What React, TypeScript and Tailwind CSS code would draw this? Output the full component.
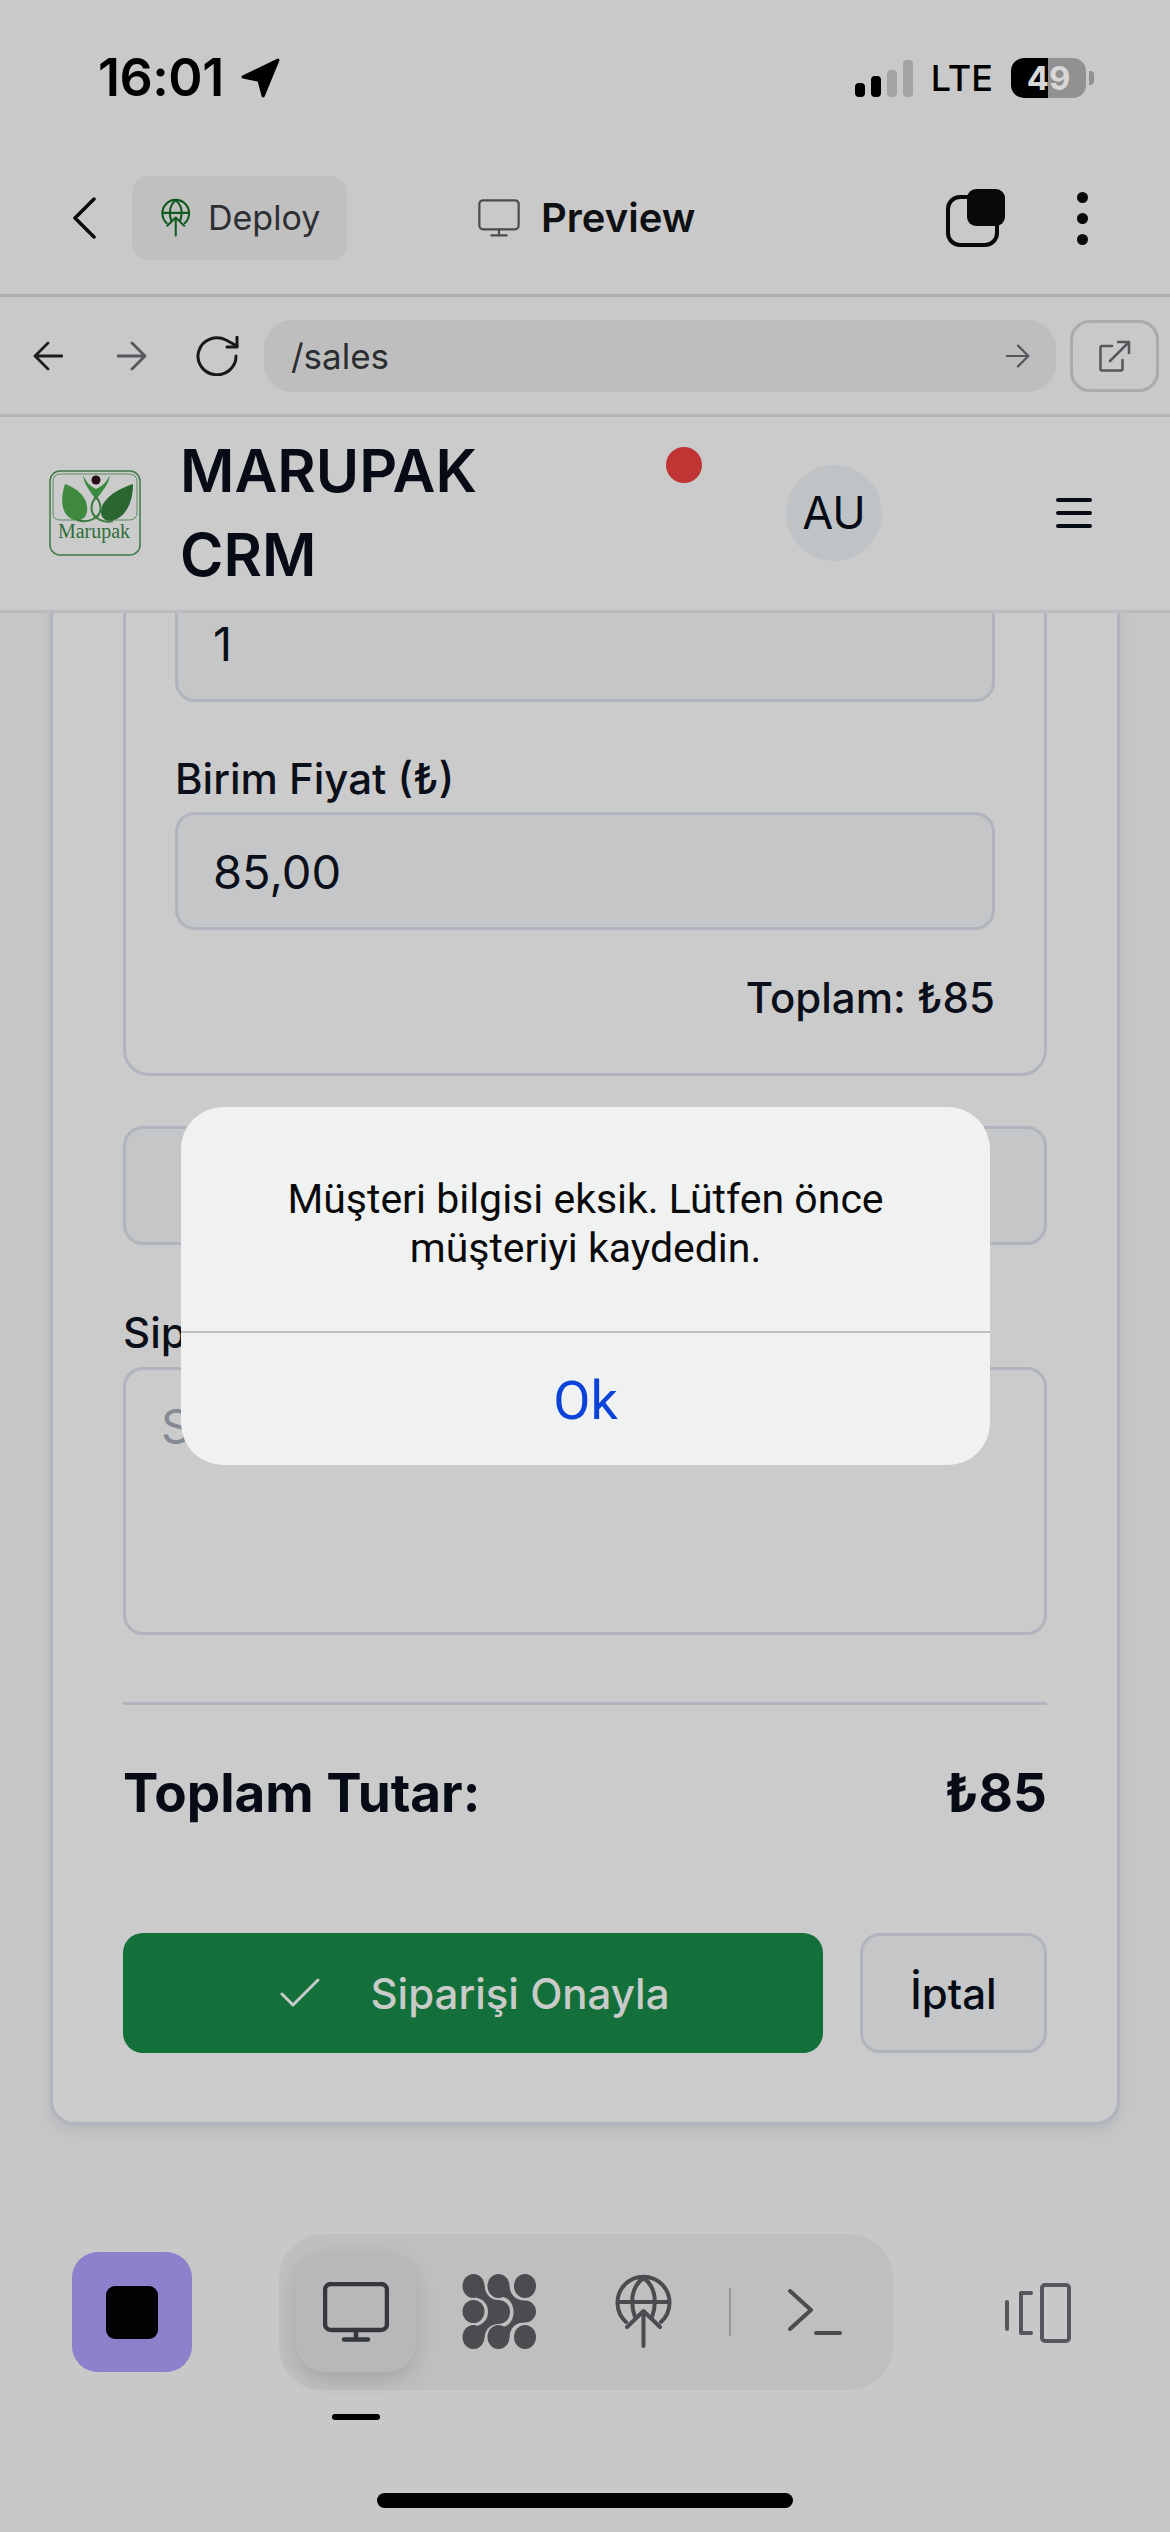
import { JSX } from 'react'

const GlobeUp = ({ className, color }: { className: string; color: string }): JSX.Element => (
  <svg viewBox="0 0 70 84" className={className} fill="none" stroke={color} strokeWidth="4" strokeLinecap="round" strokeLinejoin="round">
    <path d="M17 52A26 26 0 1 1 52 52" />
    <path d="M26 47C20 30 24 15 34.500 8C45 15 49 30 43 47" />
    <path d="M9 32H60" />
    <path d="M34.500 76V42M18 57L34.500 41L51 57" />
  </svg>
)

const Monitor = ({ className, color, width }: { className: string; color: string; width: number }): JSX.Element => (
  <svg viewBox="0 0 66 60" className={className} fill="none" stroke={color} strokeWidth={width} strokeLinecap="round" strokeLinejoin="round">
    <rect x="2" y="2" width="62" height="46" rx="6" />
    <path d="M33 48V57M21 57.500H45" />
  </svg>
)

const Blobs = (): JSX.Element => (
  <svg viewBox="0 0 90 84" className="h-[84px] w-[90px]" fill="#4a4c50">
    <ellipse cx="18.500" cy="16" rx="11" ry="12" />
    <ellipse cx="43.500" cy="16" rx="11" ry="12" />
    <ellipse cx="70" cy="16" rx="11" ry="12" />
    <ellipse cx="18.500" cy="41.500" rx="11" ry="11.500" />
    <ellipse cx="18.500" cy="67" rx="11" ry="12" />
    <ellipse cx="43.500" cy="67" rx="11" ry="12" />
    <ellipse cx="70" cy="67" rx="11" ry="12" />
    <path d="M18 16L29.500 16C30 24 36 30 43 30C51 30 55 36 55 42C55 48 51 54 43 54C36 54 30.500 59 29.500 67L18 67L22 56C28 54 33 50 33 42C33 34 28 29 22 28Z" />
    <path d="M34 22C36 25 40 26.500 44 26.500C54 26.500 58.500 34 58.500 42C58.500 50 54 57.500 44 57.500C40 57.500 36 59 34 62L44 67L54.500 67C55 58 60 52.500 70 52.500A11 11 0 0 0 70 30.500C60 30.500 55 24 54.500 16L44 16Z" />
  </svg>
)

const Logo = (): JSX.Element => (
  <svg viewBox="0 0 92 86" className="h-[86px] w-[92px] shrink-0" fill="none">
    <rect x="1" y="1" width="90" height="84" rx="10" stroke="#3d7a48" strokeWidth="1.500" />
    <path d="M4 44V12Q4 4 12 4H80Q88 4 88 12V42Q88 50 80 50H62M30 50H12Q4 50 4 44" stroke="#3d7a48" strokeWidth="0.800" />
    <path d="M16 14C28 18 40 28 38 42C37 48 32 51 26 50C16 48 9 36 16 14Z" fill="#3f8a3f" />
    <path d="M84 14C84 36 74 50 60 51C52 50 50 42 54 34C60 24 72 18 84 14Z" fill="#2a6630" />
    <path d="M34 5C35 15 42 22 47 30C52 22 60 15 61 5C58 12 52 17 47 19C42 17 37 12 34 5Z" fill="#3a8a40" />
    <path d="M47 27C41 34 41 42 47 48C53 42 53 34 47 27ZM28 50Q42 54 50 44M64 51Q52 54 44 44" stroke="#3a7a40" strokeWidth="2" />
    <circle cx="47" cy="10" r="4.500" fill="#2a0d18" />
    <text x="45" y="68" textAnchor="middle" fontFamily="'Liberation Serif', serif" fontSize="20" fill="#2f6e3c">Marupak</text>
  </svg>
)

const BrowserArrow = ({ back, className, color }: { back?: boolean; className: string; color: string }): JSX.Element => (
  <svg viewBox="0 0 30 30" className={className} fill="none" stroke={color} strokeWidth="2.800" strokeLinecap="round" strokeLinejoin="round">
    {back ? <path d="M29 15H2M15 2L2 15L15 28" /> : <path d="M1 15H28M15 2L28 15L15 28" />}
  </svg>
)

const StatusBar = (): JSX.Element => (
  <div className="flex h-[106px] pt-[50px]">
    <div className="ml-[98px] flex h-[56px] items-center">
      <span className="text-[52px] leading-[56px] font-semibold tracking-[-0.5px] text-black">16:01</span>
      <svg viewBox="0 0 38 38" className="ml-[16px] h-[40px] w-[40px]" fill="#000" stroke="#000" strokeWidth="3" strokeLinejoin="round">
        <path d="M36 2L3 18L18 21L22 36Z" />
      </svg>
    </div>
    <div className="ml-auto mr-[76px] flex h-[56px] items-center">
      <div className="flex h-[37px] items-end gap-[6px]">
        <span className="h-[14px] w-[10px] rounded-[4px] bg-black" />
        <span className="h-[21px] w-[10px] rounded-[4px] bg-black" />
        <span className="h-[27px] w-[10px] rounded-[4px] bg-[#a3a3a3]" />
        <span className="h-[37px] w-[10px] rounded-[4px] bg-[#a3a3a3]" />
      </div>
      <span className="ml-[18px] text-[36px] leading-[56px] font-medium text-black">LTE</span>
      <div className="relative ml-[18px] flex h-[40px] w-[75px] items-center justify-center overflow-hidden rounded-[13px] bg-[linear-gradient(to_right,#000_49%,#919191_49%)]">
        <span className="text-[33px] leading-[40px] font-bold text-[#d8d8d8]">49</span>
      </div>
      <span className="ml-[3px] h-[14px] w-[5px] rounded-r-[4px] bg-[#919191]" />
    </div>
  </div>
)

const TopBar = (): JSX.Element => (
  <div className="flex h-[191px] items-start border-b-[3px] border-[#aeafb0] pt-[70px]">
    <div className="flex h-[84px] items-center">
      <svg viewBox="0 0 24 42" className="ml-[72px] h-[42px] w-[24px]" fill="none" stroke="#0a0a0a" strokeWidth="3.500" strokeLinecap="round" strokeLinejoin="round">
        <path d="M22 2L3 21L22 40" />
      </svg>
      <button type="button" className="ml-[36px] flex h-[84px] w-[215px] items-center rounded-[16px] bg-[#c0c0c0] pl-[26px]">
        <GlobeUp className="h-[44px] w-[36px]" color="#0f5a1e" />
        <span className="ml-[14px] text-[34px] leading-[44px] text-[#2d2f33]">Deploy</span>
      </button>
      <Monitor className="ml-[131px] h-[38px] w-[42px]" color="#4a4c50" width={3.500} />
      <span className="ml-[21px] text-[40px] leading-[48px] font-semibold text-[#0f1013]">Preview</span>
    </div>
    <div className="ml-auto flex h-[84px] items-center">
      <div className="relative mr-[72px] h-[58px] w-[59px]">
        <span className="absolute bottom-0 left-0 h-[52px] w-[53px] rounded-[14px] border-[4px] border-[#08090b]" />
        <span className="absolute right-0 top-0 h-[37px] w-[38px] rounded-[9px] bg-[#08090b]" />
      </div>
      <div className="mr-[82px] flex flex-col gap-[10px]">
        <span className="h-[11px] w-[11px] rounded-full bg-[#08090b]" />
        <span className="h-[11px] w-[11px] rounded-full bg-[#08090b]" />
        <span className="h-[11px] w-[11px] rounded-full bg-[#08090b]" />
      </div>
    </div>
  </div>
)

const BrowserBar = (): JSX.Element => (
  <div className="flex h-[120px] items-center border-b-[3px] border-[#b4b5b7]">
    <BrowserArrow back className="ml-[33px] h-[30px] w-[30px]" color="#1c1d20" />
    <BrowserArrow className="ml-[54px] h-[30px] w-[30px]" color="#55575c" />
    <svg viewBox="0 0 46 40" className="ml-[49px] h-[40px] w-[46px]" fill="none" stroke="#17181a" strokeWidth="3" strokeLinecap="round" strokeLinejoin="round">
      <path d="M40 20A19 18.500 0 1 1 30 4L41 10" />
      <path d="M41 1V11H31" />
    </svg>
    <div className="ml-[22px] flex h-[72px] w-[792px] items-center rounded-[28px] bg-[#bebebe] pl-[27px] pr-[26px]">
      <span className="text-[35px] leading-[44px] text-[#2b2c30]">/sales</span>
      <BrowserArrow className="ml-auto h-[24px] w-[24px]" color="#55575c" />
    </div>
    <button type="button" className="ml-[14px] flex h-[72px] w-[89px] items-center justify-center rounded-[20px] border-[3px] border-[#a9aaac]">
      <svg viewBox="0 0 32 32" className="h-[32px] w-[32px]" fill="none" stroke="#55575c" strokeWidth="2.500" strokeLinecap="round" strokeLinejoin="round">
        <path d="M13 6H3Q1.500 6 1.500 7.500V29Q1.500 30.500 3 30.500H22Q23.500 30.500 23.500 29V20" />
        <path d="M11 21L30 2M19 2H30V13" />
      </svg>
    </button>
  </div>
)

const AppHeader = (): JSX.Element => (
  <div className="relative flex h-[196px] items-center border-b-[3px] border-[#b9bbbe] bg-[#cbcbcb] pb-[2px]">
    <div className="ml-[49px]"><Logo /></div>
    <h1 className="ml-[39px] w-[400px] text-[59px] leading-[84px] font-semibold text-[#070b16]">MARUPAK<br />CRM</h1>
    <span className="absolute left-[666px] top-[30px] h-[36px] w-[36px] rounded-full bg-[#c03434]" />
    <div className="ml-auto flex h-[96px] w-[96px] items-center justify-center rounded-full bg-[#bfc3c6] text-[45px] text-[#070b16]">AU</div>
    <svg viewBox="0 0 36 30" className="ml-[174px] mr-[78px] h-[30px] w-[36px]" fill="none" stroke="#070b16" strokeWidth="4" strokeLinecap="round">
      <path d="M2 2H34M2 15H34M2 28H34" />
    </svg>
  </div>
)

const fieldClass = 'block w-full rounded-[20px] border-[3px] border-[#b0b4bc] bg-[#c5c6c8] px-[35px] text-[47px] text-[#0b0f1a] outline-none'

const OrderCard = (): JSX.Element => (
  <div className="mx-[50px] -mt-[61px] rounded-[24px] border-[3px] border-[#b0b4bc] bg-[#cbcbcb] px-[70px] pb-[69px] pt-[26px] shadow-[0_6px_12px_rgba(0,0,0,0.07)]">
    <div className="rounded-[26px] border-[3px] border-[#b0b4bc] px-[49px] pb-[51px]">
      <input readOnly value="1" className={`${fieldClass} h-[118px]`} />
      <label className="mt-[53px] mb-[9px] block text-[42px] leading-[48px] font-medium text-[#0b0f1a]">Birim Fiyat (₺)</label>
      <input readOnly value="85,00" className={`${fieldClass} h-[118px]`} />
      <p className="mt-[44px] text-right text-[42px] leading-[48px] font-medium text-[#0b0f1a]">Toplam: ₺85</p>
    </div>
    <div className="mt-[50px] h-[119px] rounded-[20px] border-[3px] border-[#b0b4bc] bg-[#c5c6c8]" />
    <label className="mt-[64px] mb-[10px] block text-[42px] leading-[48px] font-medium text-[#0b0f1a]">Sipariş Notları</label>
    <textarea readOnly placeholder="Sipariş notları..." className="block h-[268px] w-full resize-none rounded-[20px] border-[3px] border-[#b0b4bc] px-[35px] py-[28px] text-[47px] leading-[56px] outline-none placeholder:text-[#858a94]" />
    <div className="mt-[67px] h-[3px] bg-[#b0b4bc]" />
    <div className="mt-[54px] flex h-[70px] items-center justify-between text-[53px] font-bold text-[#070b16]">
      <span>Toplam Tutar:</span>
      <span>₺85</span>
    </div>
    <div className="mt-[104px] flex h-[120px] gap-[37px]">
      <button type="button" className="flex w-[700px] items-center justify-center rounded-[20px] bg-[#13703a] pl-[4px] text-[42px] font-medium text-[#c9cbc9]">
        <svg viewBox="0 0 40 30" className="mr-[50px] h-[30px] w-[40px]" fill="none" stroke="#c9cbc9" strokeWidth="3" strokeLinecap="round" strokeLinejoin="round">
          <path d="M2 16L13 27L38 2" />
        </svg>
        Siparişi Onayla
      </button>
      <button type="button" className="flex-1 rounded-[20px] border-[3px] border-[#b0b4bc] bg-[#c5c6c8] text-[42px] font-medium text-[#070b16]">İptal</button>
    </div>
  </div>
)

const AlertDialog = (): JSX.Element => (
  <div className="absolute left-[181px] top-[1107px] w-[809px] overflow-hidden rounded-[42px] bg-[#f0f2f1]">
    <p className="px-[40px] pb-[58px] pt-[68px] text-center font-['Roboto',sans-serif] text-[41px] leading-[49px] text-[#0a0a0a]">
      Müşteri bilgisi eksik. Lütfen önce<br />müşteriyi kaydedin.
    </p>
    <div className="h-[2px] bg-[#bcbebf]" />
    <button type="button" className="flex h-[132px] w-full items-center justify-center pt-[2px] font-['Roboto',sans-serif] text-[54px] text-[#0b43d9]">Ok</button>
  </div>
)

const BottomBar = (): JSX.Element => (
  <div className="h-[340px] bg-[#c8c8c8] pt-[42px]">
    <div className="flex h-[156px]">
      <button type="button" className="ml-[72px] mt-[18px] flex h-[120px] w-[120px] items-center justify-center rounded-[26px] bg-[#8e80cc]">
        <span className="h-[53px] w-[52px] rounded-[9px] bg-[#020204]" />
      </button>
      <div className="ml-[87px] flex h-[156px] w-[614px] items-center rounded-[44px] bg-[#bfbfbf] px-[17px]">
        <button type="button" className="relative flex h-[120px] w-[120px] items-center justify-center rounded-[30px] bg-[#b7b8b9] shadow-[0_8px_20px_rgba(0,0,0,0.13)]">
          <Monitor className="h-[60px] w-[66px]" color="#35373b" width={4.500} />
          <span className="absolute -bottom-[48px] left-[36px] h-[6px] w-[48px] rounded-full bg-black" />
        </button>
        <div className="ml-[24px] flex h-[120px] w-[120px] items-center justify-center"><Blobs /></div>
        <div className="ml-[24px] flex h-[120px] w-[120px] items-center justify-center">
          <GlobeUp className="h-[84px] w-[70px]" color="#4a4c50" />
        </div>
        <span className="ml-[25px] h-[48px] w-[2px] bg-[#96989b]" />
        <div className="ml-[24px] flex h-[120px] w-[120px] items-center justify-center">
          <svg viewBox="0 0 54 46" className="h-[46px] w-[54px]" fill="none" stroke="#4a4c50" strokeWidth="4" strokeLinecap="round" strokeLinejoin="round">
            <path d="M2 2L23 21L2 40M28 44H52" />
          </svg>
        </div>
      </div>
      <svg viewBox="0 0 66 60" className="ml-[112px] mt-[49px] h-[60px] w-[66px]" fill="none" stroke="#55575c" strokeWidth="4" strokeLinecap="round" strokeLinejoin="round">
        <path d="M2 19V46M26 10H16V50H26" />
        <rect x="37" y="2" width="27" height="56" rx="3" />
      </svg>
    </div>
    <div className="mx-auto mt-[103px] h-[15px] w-[416px] rounded-full bg-black" />
  </div>
)

export default function App(): JSX.Element {
  return (
    <div className="relative flex h-[2532px] w-full flex-col overflow-hidden bg-[#c9c9c9] font-['Inter',sans-serif]">
      <StatusBar />
      <TopBar />
      <BrowserBar />
      <AppHeader />
      <main className="min-h-0 flex-1 overflow-hidden bg-[#c5c6c8]">
        <OrderCard />
      </main>
      <BottomBar />
      <AlertDialog />
    </div>
  )
}
